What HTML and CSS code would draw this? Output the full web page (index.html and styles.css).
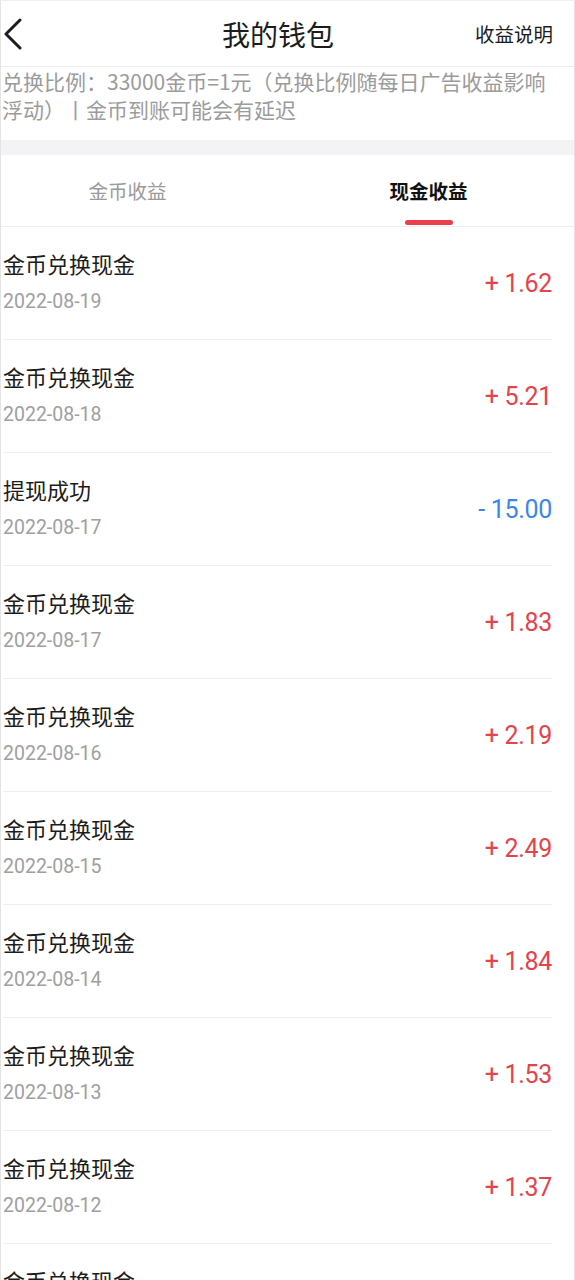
FILE: index.html
```
<!DOCTYPE html>
<html lang="zh-CN">
<head>
    <meta charset="UTF-8">
    <meta name="viewport" content="width=device-width, initial-scale=1.0">
    <title>我的钱包</title>
    <link rel="stylesheet" href="styles.css">
</head>
<body>
    <div class="page">
        <div class="header">
            <div class="header-inner">
                <svg class="back" width="20" height="32" viewBox="0 0 20 32">
                    <path d="M17 2 L3 16 L17 30" fill="none" stroke="#1c1c24" stroke-width="3" stroke-linecap="round" stroke-linejoin="round"/>
                </svg>
                <div class="title">我的钱包</div>
                <div class="explain">收益说明</div>
            </div>
        </div>

        <div class="notice">兑换比例：33000金币=1元（兑换比例随每日广告收益影响浮动）丨金币到账可能会有延迟</div>

        <div class="band"></div>

        <div class="tabs">
            <div class="tabs-inner">
                <div class="tab">金币收益</div>
                <div class="tab active">现金收益</div>
            </div>
        </div>

        <div class="list">
            <div class="row">
                <div class="info"><div class="name">金币兑换现金</div><div class="date">2022-08-19</div></div>
                <div class="amount plus">+ 1.62</div>
            </div>
            <div class="row">
                <div class="info"><div class="name">金币兑换现金</div><div class="date">2022-08-18</div></div>
                <div class="amount plus">+ 5.21</div>
            </div>
            <div class="row">
                <div class="info"><div class="name">提现成功</div><div class="date">2022-08-17</div></div>
                <div class="amount minus">- 15.00</div>
            </div>
            <div class="row">
                <div class="info"><div class="name">金币兑换现金</div><div class="date">2022-08-17</div></div>
                <div class="amount plus">+ 1.83</div>
            </div>
            <div class="row">
                <div class="info"><div class="name">金币兑换现金</div><div class="date">2022-08-16</div></div>
                <div class="amount plus">+ 2.19</div>
            </div>
            <div class="row">
                <div class="info"><div class="name">金币兑换现金</div><div class="date">2022-08-15</div></div>
                <div class="amount plus">+ 2.49</div>
            </div>
            <div class="row">
                <div class="info"><div class="name">金币兑换现金</div><div class="date">2022-08-14</div></div>
                <div class="amount plus">+ 1.84</div>
            </div>
            <div class="row">
                <div class="info"><div class="name">金币兑换现金</div><div class="date">2022-08-13</div></div>
                <div class="amount plus">+ 1.53</div>
            </div>
            <div class="row">
                <div class="info"><div class="name">金币兑换现金</div><div class="date">2022-08-12</div></div>
                <div class="amount plus">+ 1.37</div>
            </div>
            <div class="row">
                <div class="info"><div class="name">金币兑换现金</div><div class="date">2022-08-11</div></div>
                <div class="amount plus">+ 1.26</div>
            </div>
        </div>
    </div>
</body>
</html>
```

FILE: styles.css
```
body {
    margin: 0;
    background: #fff;
    font-family: Roboto, "Noto Sans CJK SC", sans-serif;
    color: #1c1c1c;
    overflow: hidden;
    height: 1280px;
}
.page {
    width: 575px;
    min-height: 1280px;
    border-left: 1px solid #e4e4e4;
    border-right: 1px solid #e4e4e4;
    border-top: 1px solid #f0f0f0;
    box-sizing: border-box;
}
.header {
    height: 65px;
    border-bottom: 1px solid #ececec;
}
.header-inner {
    height: 100%;
    margin: 0 21px 0 2px;
    display: flex;
    align-items: center;
    justify-content: space-between;
    position: relative;
}
.back {
    display: block;
}
.title {
    position: absolute;
    left: 0;
    right: 0;
    text-align: center;
    font-size: 28px;
    font-family: "Noto Sans CJK SC", sans-serif;
    pointer-events: none;
}
.explain {
    font-size: 19.5px;
    font-family: "Noto Sans CJK SC", sans-serif;
}
.notice {
    padding: 0 20px 0 1px;
    font-size: 21px;
    line-height: 28px;
    height: 73px;
    color: #9b9b9b;
    font-family: "Noto Sans CJK SC", sans-serif;
}
.band {
    height: 15px;
    background: #f3f3f5;
}
.tabs {
    height: 71px;
    border-bottom: 1px solid #efefef;
}
.tabs-inner {
    height: 100%;
    margin: 0 21px 0 2px;
    display: flex;
    justify-content: center;
    gap: 141px;
}
.tab {
    width: 160px;
    text-align: center;
    font-size: 19.5px;
    line-height: 71px;
    color: #9a9a9a;
    position: relative;
    font-family: "Noto Sans CJK SC", sans-serif;
}
.tab.active {
    color: #111;
    font-weight: bold;
}
.tab.active::after {
    content: '';
    position: absolute;
    left: 56px;
    bottom: 1px;
    width: 48px;
    height: 5px;
    border-radius: 3px;
    background: #e8414b;
}
.list {
    margin: 0 22px 0 2px;
}
.row {
    display: flex;
    justify-content: space-between;
    align-items: center;
    height: 112px;
    border-bottom: 1px solid #efefef;
}
.info {
    margin-top: -3px;
}
.name {
    font-size: 22px;
    line-height: 30px;
    color: #1c1c1c;
    font-family: "Noto Sans CJK SC", sans-serif;
}
.date {
    margin-top: 11px;
    font-size: 19.5px;
    line-height: 26px;
    color: #a0a0a0;
}
.amount {
    font-size: 25px;
    letter-spacing: -0.3px;
}
.plus {
    color: #e5434b;
}
.minus {
    color: #3b86ea;
}
```
